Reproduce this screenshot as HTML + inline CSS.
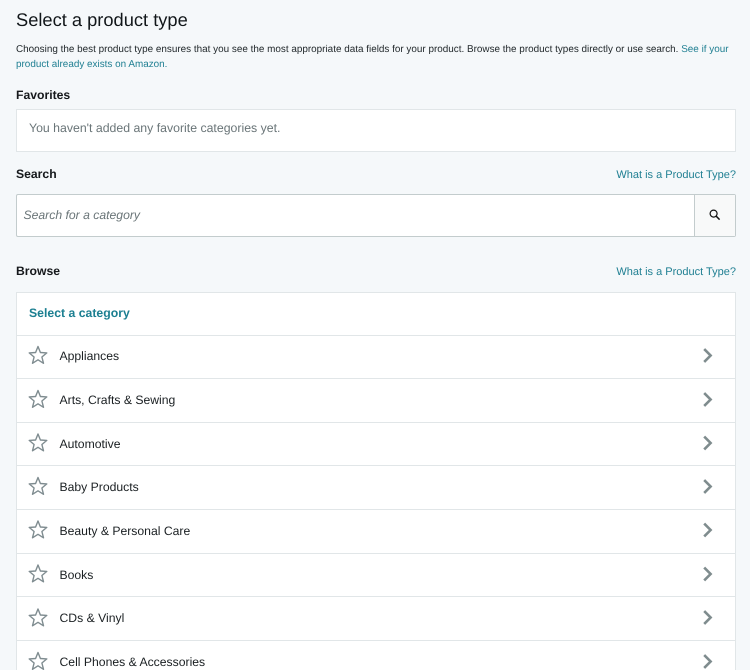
<!DOCTYPE html>
<html><head><meta charset="utf-8"><style>
html,body{margin:0;padding:0;width:750px;height:670px;overflow:hidden}
body{background:#f5f8fa;font-family:"Liberation Sans",sans-serif;color:#111;text-rendering:geometricPrecision}
#w{position:absolute;left:0;top:0;width:750px;height:670px;overflow:hidden;filter:blur(.3px)}
.t{position:absolute;white-space:nowrap}
.b{font-size:12.2px;font-weight:bold;color:#16191c;line-height:14px}
.a{color:#1f7f92}
.l{font-size:11px;line-height:14px;color:#1f7f92}
.box{position:absolute;background:#fff;border:1px solid #e1e6e8;box-sizing:border-box}
.sep{position:absolute;left:17px;width:718px;height:1px;background:#e1e6e8}
.r{position:absolute;left:59.5px;font-size:12.2px;line-height:14px;color:#1b2023;white-space:nowrap}
svg{position:absolute}
</style></head><body><div id="w">
<div class="t" style="left:16px;top:9px;font-size:18.3px;line-height:22px;color:#111619">Select a product type</div>
<div class="t" style="left:16px;top:41.5px;font-size:9.92px;line-height:15px;color:#1f2629">Choosing the best product type ensures that you see the most appropriate data fields for your product. Browse the product types directly or use search. <span class="a">See if your</span><br><span class="a">product already exists on Amazon.</span></div>
<div class="t b" style="left:16px;top:88px">Favorites</div>
<div class="box" style="left:16px;top:109px;width:720px;height:43px"></div>
<div class="t" style="left:29px;top:121px;font-size:12.3px;line-height:14px;color:#6a7578">You haven't added any favorite categories yet.</div>
<div class="t b" style="left:16px;top:167px">Search</div>
<div class="t l" style="right:14px;top:167.5px">What is a Product Type?</div>
<div class="box" style="left:16px;top:194px;width:720px;height:43px;border-color:#c3cccd;border-radius:2px"></div>
<div style="position:absolute;left:694px;top:195px;width:41px;height:41px;background:#f8f9f9;border-left:1px solid #c3cccd;box-sizing:border-box"></div>
<svg style="left:707.5px;top:208px" width="14" height="14" viewBox="0 0 14 14"><circle cx="5.6" cy="5.6" r="3.5" fill="none" stroke="#111" stroke-width="1.2"/><path d="M8.2 8.2L11.6 11.6" stroke="#111" stroke-width="1.5"/></svg>
<div class="t" style="left:23.5px;top:208px;font-size:12.2px;line-height:14px;font-style:italic;color:#6a7578">Search for a category</div>
<div class="t b" style="left:16px;top:264px">Browse</div>
<div class="t l" style="right:14px;top:264.5px">What is a Product Type?</div>
<div class="box" style="left:16px;top:292px;width:720px;height:400px"></div>
<div class="t" style="left:29px;top:306px;font-size:12.25px;font-weight:bold;line-height:14px;color:#1c7f91">Select a category</div>
<div class="sep" style="top:335px"></div>
<div class="sep" style="top:378px"></div>
<div class="sep" style="top:422px"></div>
<div class="sep" style="top:465px"></div>
<div class="sep" style="top:509px"></div>
<div class="sep" style="top:553px"></div>
<div class="sep" style="top:596px"></div>
<div class="sep" style="top:640px"></div>
<div class="r" style="top:349px">Appliances</div>
<div class="r" style="top:393px">Arts, Crafts &amp; Sewing</div>
<div class="r" style="top:437px">Automotive</div>
<div class="r" style="top:480px">Baby Products</div>
<div class="r" style="top:524px">Beauty &amp; Personal Care</div>
<div class="r" style="top:568px">Books</div>
<div class="r" style="top:611px">CDs &amp; Vinyl</div>
<div class="r" style="top:655px">Cell Phones &amp; Accessories</div>
<svg style="left:0;top:0" width="750" height="670" viewBox="0 0 750 670">
<defs>
<path id="s" d="M0-9L2.4-3 8.8-2.6 3.9 1.5 5.5 7.8 0 4.3-5.5 7.8-3.9 1.5-8.8-2.6-2.4-3Z" fill="none" stroke="#7f8c90" stroke-width="1.4" stroke-linejoin="round"/>
<path id="c" d="M-3.8-6.4L2.6 0-3.8 6.4" fill="none" stroke="#7f8c8e" stroke-width="2.6"/>
</defs>
<use href="#s" x="38" y="355.5"/><use href="#s" x="38" y="399.5"/><use href="#s" x="38" y="443"/><use href="#s" x="38" y="486.5"/><use href="#s" x="38" y="530"/><use href="#s" x="38" y="574"/><use href="#s" x="38" y="618"/><use href="#s" x="38" y="661.5"/>
<use href="#c" x="708" y="355.5"/><use href="#c" x="708" y="399.5"/><use href="#c" x="708" y="443"/><use href="#c" x="708" y="486.5"/><use href="#c" x="708" y="530"/><use href="#c" x="708" y="574"/><use href="#c" x="708" y="617.5"/><use href="#c" x="708" y="661.5"/>
</svg>
</div></body></html>
